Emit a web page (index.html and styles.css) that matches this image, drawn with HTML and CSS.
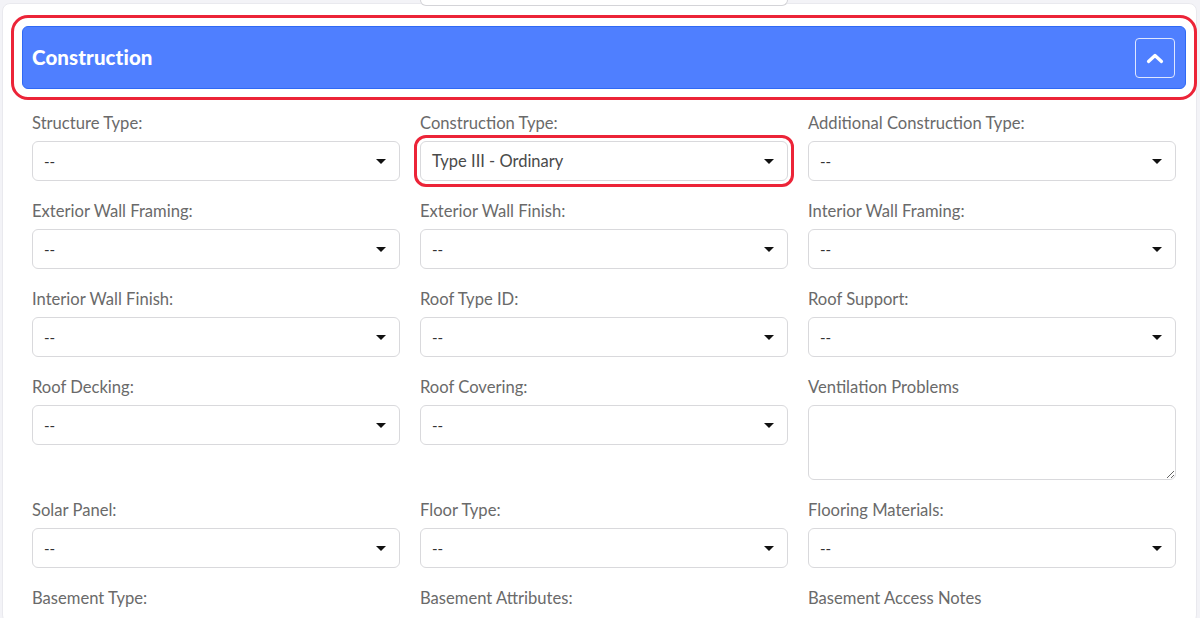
FILE: index.html
```html
<!DOCTYPE html>
<html lang="en">
<head>
  <meta charset="UTF-8" />
  <title>Construction</title>
  <link rel="stylesheet" href="styles.css">
</head>
<body>
  <div class="prev-row">
    <div></div>
    <div class="prev-textarea"></div>
    <div></div>
  </div>

  <div class="card">
    <div class="section-header highlight">
      <h2>Construction</h2>
      <button class="toggle" type="button" aria-label="Collapse">
        <svg width="18" height="12" viewBox="0 0 18 12">
          <path d="M2.5 9.5 L9 3.5 L15.5 9.5" fill="none" stroke="#fff" stroke-width="3.2" stroke-linecap="round" stroke-linejoin="round"/>
        </svg>
      </button>
    </div>

    <div class="fields">
      <div class="field">
        <label>Structure Type:</label>
        <div class="select"><span>--</span><i class="caret"></i></div>
      </div>
      <div class="field">
        <label>Construction Type:</label>
        <div class="select highlight-sm"><span class="value">Type III - Ordinary</span><i class="caret"></i></div>
      </div>
      <div class="field">
        <label>Additional Construction Type:</label>
        <div class="select"><span>--</span><i class="caret"></i></div>
      </div>

      <div class="field">
        <label>Exterior Wall Framing:</label>
        <div class="select"><span>--</span><i class="caret"></i></div>
      </div>
      <div class="field">
        <label>Exterior Wall Finish:</label>
        <div class="select"><span>--</span><i class="caret"></i></div>
      </div>
      <div class="field">
        <label>Interior Wall Framing:</label>
        <div class="select"><span>--</span><i class="caret"></i></div>
      </div>

      <div class="field">
        <label>Interior Wall Finish:</label>
        <div class="select"><span>--</span><i class="caret"></i></div>
      </div>
      <div class="field">
        <label>Roof Type ID:</label>
        <div class="select"><span>--</span><i class="caret"></i></div>
      </div>
      <div class="field">
        <label>Roof Support:</label>
        <div class="select"><span>--</span><i class="caret"></i></div>
      </div>

      <div class="field">
        <label>Roof Decking:</label>
        <div class="select"><span>--</span><i class="caret"></i></div>
      </div>
      <div class="field">
        <label>Roof Covering:</label>
        <div class="select"><span>--</span><i class="caret"></i></div>
      </div>
      <div class="field">
        <label>Ventilation Problems</label>
        <textarea></textarea>
      </div>

      <div class="field">
        <label>Solar Panel:</label>
        <div class="select"><span>--</span><i class="caret"></i></div>
      </div>
      <div class="field">
        <label>Floor Type:</label>
        <div class="select"><span>--</span><i class="caret"></i></div>
      </div>
      <div class="field">
        <label>Flooring Materials:</label>
        <div class="select"><span>--</span><i class="caret"></i></div>
      </div>

      <div class="field">
        <label>Basement Type:</label>
      </div>
      <div class="field">
        <label>Basement Attributes:</label>
      </div>
      <div class="field">
        <label>Basement Access Notes</label>
      </div>
    </div>
  </div>
</body>
</html>
```

FILE: styles.css
```css
* {
  box-sizing: border-box;
}

body {
  margin: 0;
  background: #f3f3f7;
  font-family: Lato, 'Liberation Sans', sans-serif;
  color: #444;
  overflow: hidden;
}

.prev-row {
  display: grid;
  grid-template-columns: 368px 368px 368px;
  column-gap: 20px;
  padding-left: 32px;
  position: relative;
  z-index: 1;
}

.prev-textarea {
  height: 6px;
  background: #fff;
  border: 1px solid #d4d4d8;
  border-top: none;
  border-radius: 0 0 6px 6px;
}

.card {
  margin: -3px 3px 0 2px;
  background: #fff;
  border: 1px solid #e9e9ee;
  border-radius: 8px;
  padding: 22px 10px 6px 19px;
}

.section-header {
  display: flex;
  align-items: center;
  justify-content: space-between;
  height: 63px;
  padding: 0 10px 0 9px;
  background: #4f7fff;
  border: 1px solid #2f69f5;
  border-radius: 6px;
}

.highlight {
  outline: 3px solid #ec2438;
  outline-offset: 8px;
}

.section-header h2 {
  margin: 0 0 1px;
  color: #fff;
  font-size: 20.5px;
  font-weight: 900;
  letter-spacing: 0.1px;
}

.toggle {
  width: 40px;
  height: 40px;
  padding: 0;
  display: flex;
  align-items: center;
  justify-content: center;
  background: transparent;
  border: 1px solid #dfe7ff;
  border-radius: 4px;
}

.fields {
  display: grid;
  grid-template-columns: 368px 368px 368px;
  column-gap: 20px;
  row-gap: 20px;
  margin-top: 24px;
  padding-left: 10px;
  align-items: start;
}

.field label {
  display: block;
  font-size: 16.6px;
  line-height: 20px;
  color: #6a6a6a;
  margin-bottom: 8px;
}

.select {
  height: 40px;
  display: flex;
  align-items: center;
  justify-content: space-between;
  padding: 0 12px 0 11px;
  border: 1px solid #d9d9dc;
  border-radius: 6px;
  font-size: 15px;
  color: #333;
}

.select .value {
  font-size: 16.5px;
  color: #4a4a4a;
}

.highlight-sm {
  outline: 3px solid #ec2438;
  outline-offset: 3px;
}

.caret {
  width: 0;
  height: 0;
  border-left: 5px solid transparent;
  border-right: 5px solid transparent;
  border-top: 5px solid #111;
  margin-right: 1px;
}

textarea {
  display: block;
  width: 368px;
  height: 75px;
  border: 1px solid #d9d9dc;
  border-radius: 6px;
  font-family: inherit;
  resize: vertical;
}
```
